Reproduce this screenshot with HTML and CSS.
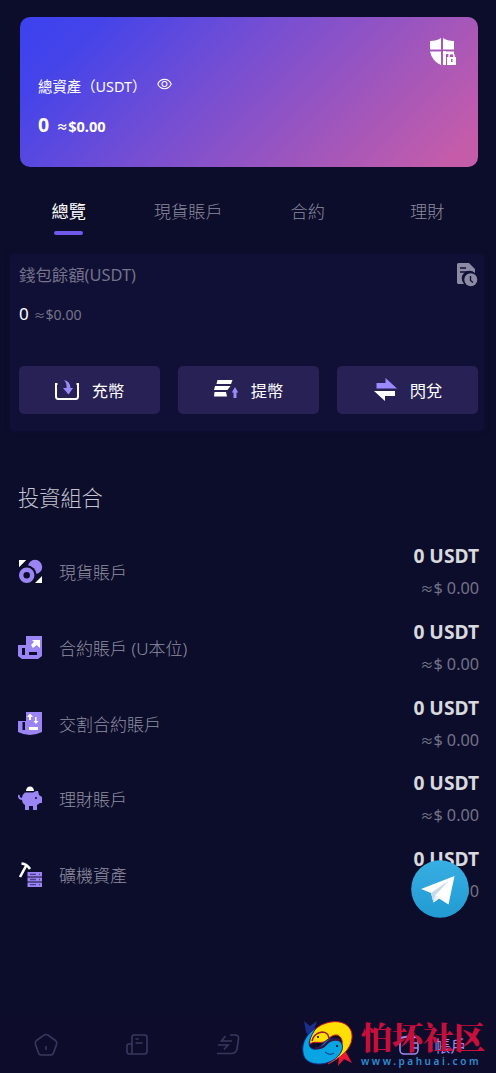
FILE: index.html
```html
<!DOCTYPE html>
<html lang="zh-Hant">
<head>
<meta charset="utf-8">
<title>帳戶</title>
<link rel="stylesheet" href="styles.css">
</head>
<body>
<main class="page">
  <section class="asset-card">
    <div class="asset-info">
      <div class="asset-title"><span>總資產（USDT）</span>
        <svg class="eye" viewBox="0 0 16 12" fill="none" stroke="#fff" stroke-width="1.1"><path d="M.8 6C3.8-.6 12.2-.6 15.2 6 12.2 12.6 3.8 12.6.8 6Z"/><circle cx="8" cy="6" r="2.7"/></svg>
      </div>
      <div class="asset-value"><b class="amount">0</b><b class="fiat"><i>≈</i>$0.00</b></div>
    </div>
    <svg class="shield" viewBox="0 0 28 30"><path fill="#fff" d="M1 4Q8 4 12 1V12.500H1ZM14 1Q18 4 25 4V12.500H14ZM1 14.500H12V28Q3 24 1 14.500ZM14 14.500H25V17H14Z"/><path fill="#fff" d="M14 14H17V28H14Z"/><path fill="#fff" d="M18 20H27V28H18Z"/><path d="M20 20V18.500Q20 16.500 22.500 16.500T25 18.500V20" fill="none" stroke="#fff" stroke-width="1.400"/><path d="M22 22h1.500v3H22Z" fill="#b05ab8"/></svg>
  </section>

  <nav class="tabs"><a class="tab active">總覽</a><a class="tab">現貨賬戶</a><a class="tab">合約</a><a class="tab">理財</a></nav>

  <section class="wallet">
    <div class="wallet-head"><span>錢包餘額(USDT)</span>
      <svg class="history" viewBox="0 0 21 24"><path fill="#8d8ba4" d="M1.500 0H12L18 6V10A7 7 0 0 0 7 21H1.500Q0 21 0 19.500V1.500Q0 0 1.500 0Z"/><path d="M3 5h6M3 9h9" stroke="#100f35" stroke-width="1.500"/><circle cx="13.800" cy="16.700" r="6.500" fill="#8d8ba4"/><path d="M13.500 13v4.500l2.500 2" fill="none" stroke="#100f35" stroke-width="1.400"/></svg>
    </div>
    <div class="wallet-value"><span class="wallet-amount">0</span><span><i>≈</i>$0.00</span></div>
    <div class="actions">
      <button class="action"><svg viewBox="0 0 24 24"><path d="M2.500 6H1V18.500Q1 21 3.500 21H20.500Q23 21 23 18.500V6H21.500" fill="none" stroke="#fff" stroke-width="2"/><path fill="#9b8afb" d="M9 2Q15 3 15.500 10H18L13.500 16.500 8 10H11.500Q12 5 9 2Z"/></svg><span>充幣</span></button>
      <button class="action"><svg viewBox="0 0 24 24"><path fill="#fff" d="M3.500 2H18.500L17 6H2.500ZM1 8H16.500L13.500 12H0ZM.5 14H12L13 18.500H0Z"/><path fill="#9b8afb" d="M21 9L24.200 14.500H22.500V20H19.500V14.500H17.800Z"/></svg><span>提幣</span></button>
      <button class="action"><svg viewBox="0 0 24 24"><path fill="#9b8afb" d="M3.500 5H12.500V0L24 10.500H3.500Z"/><path fill="#fff" d="M1 13H22V18H12V23Z"/></svg><span>閃兌</span></button>
    </div>
  </section>

  <section class="portfolio">
    <h2>投資組合</h2>
    <div class="row"><svg viewBox="0 0 25 25"><path fill="#fff" d="M1 1H8L1 8ZM24 24H17L24 17Z"/><circle cx="17" cy="8" r="7.200" fill="#9b85f5"/><circle cx="8.700" cy="16.300" r="10" fill="#0c0d2a"/><path fill="#fff" d="M1 1H8L1 8Z"/><circle cx="8.700" cy="16.300" r="5.500" fill="none" stroke="#9b85f5" stroke-width="4.500"/></svg><span class="name">現貨賬戶</span><div class="balance"><b>0 USDT</b><span><i>≈</i>$ 0.00</span></div></div>
    <div class="row"><svg viewBox="0 0 25 25"><path fill="#9b85f5" d="M8 1H24V21L20 24H4L0 21V10H8Z"/><path fill="#fff" d="M14 5H22V13L18.500 10 15 13 13 10 16 7Z"/><path fill="#0c0d2a" d="M4 13H7V20H4ZM11 17H19V20H11Z"/></svg><span class="name">合約賬戶 (U本位)</span><div class="balance"><b>0 USDT</b><span><i>≈</i>$ 0.00</span></div></div>
    <div class="row"><svg viewBox="0 0 25 25"><path fill="#9b85f5" d="M8 1H24V21Q12 27 0 21V10H8Z"/><path fill="#0c0d2a" d="M4.500 11H7V19H4.500Z"/><path fill="#fff" d="M12 2.500L15 6H13V9H11V6H9ZM17 6H18.500V10H20.500L18 13 15.500 10H17ZM11 16H20V19H11Z"/></svg><span class="name">交割合約賬戶</span><div class="balance"><b>0 USDT</b><span><i>≈</i>$ 0.00</span></div></div>
    <div class="row"><svg viewBox="0 0 25 25"><path fill="#fff" d="M8 5A4 4.500 0 0 1 16 5Z"/><path fill="#9b85f5" d="M7 6.500H15L18 5H20L21 9 24 11V17H22L19 19V24H15V20H11V24H7V19Q3.500 17 4 12 4.500 8 7 6.500Z"/><path d="M5 13Q0 13 1 9" fill="none" stroke="#9b85f5" stroke-width="1.800"/><circle cx="18" cy="12" r="1" fill="#0c0d2a"/></svg><span class="name">理財賬戶</span><div class="balance"><b>0 USDT</b><span><i>≈</i>$ 0.00</span></div></div>
    <div class="row"><svg viewBox="0 0 25 25"><path d="M2 15L8 4M3.500 1.500Q9 2 12 7" fill="none" stroke="#fff" stroke-width="2.600"/><path fill="#9b85f5" d="M9.500 10H24V14.500H9.500ZM9.500 15.500H24V19.500H9.500ZM9.500 20.500H24V25H9.500Z"/><path d="M12 12.300h6M12 17.500h6M12 22.700h6M21 12.300h1M21 17.500h1M21 22.700h1" stroke="#4b3d91" stroke-width="1.300"/></svg><span class="name">礦機資產</span><div class="balance"><b>0 USDT</b><span><i>≈</i>$ 0.00</span></div></div>
  </section>
</main>

<svg class="telegram" viewBox="0 0 58 58"><defs><linearGradient id="tg" x2="0" y2="1"><stop stop-color="#38aee2"/><stop offset="1" stop-color="#219bd3"/></linearGradient></defs><circle cx="29" cy="29" r="28.800" fill="url(#tg)"/><path fill="#fff" d="M10 29L43.500 16 37.500 44.500 28 38.500 22.500 42.500 20 33Z"/><path fill="#c8daea" d="M20 33L38 20.500 24.500 35 22.500 42.500Z"/><path fill="#e9f1f8" d="M24.500 35L28 38.500 22.500 42.500Z"/></svg>

<nav class="bottom-bar">
  <a class="nav-item"><svg viewBox="0 0 24 24"><path d="M10 2.200Q12 .8 14 2.200L21.500 7.500Q23.300 9 22.600 11.200L19.500 20Q18.900 22 16.600 22H7.400Q5.100 22 4.500 20L1.400 11.200Q.7 9 2.500 7.500Z"/><path d="M12 13v4"/></svg></a>
  <a class="nav-item"><svg viewBox="0 0 24 24"><path d="M7 21V4Q7 2 9 2H19.500Q22 2 22 4.500V18.500Q22 21 19.500 21H4.500Q2 21 2 18.500V13Q2 11 4 11H7M10.500 6h3M10.500 10h7"/></svg></a>
  <a class="nav-item"><svg viewBox="0 0 24 24"><path d="M14 2H19Q23 2 22.500 6L21 16Q20 20.500 15 20.500H1M9.500 3L5.500 8H16M2 12H12L8 16.500"/></svg></a>
  <a class="nav-item"></a>
  <a class="nav-item current"><svg viewBox="0 0 24 24"><rect x="3" y="4" width="18" height="17" rx="4"/><path d="M5 5L15 2 18 5M21 10H16Q13 12.500 16 15H21"/></svg><span>帳戶</span></a>
</nav>

<aside class="watermark">
  <svg viewBox="0 0 52 48">
    <path fill="#1b2f8c" d="M2 1L8 6 15 1 12 10 8 18 4 12Z"/>
    <path fill="#ee1535" d="M41 27L50 43 42 39 36 46 37 36Z"/>
    <path fill="#ffe000" stroke="#d01232" stroke-width="1" d="M8 24C6 12 17 4 29 2 42 0 51 7 50 18 49 30 38 38 26 44 37 34 43 25 39 18 35 12 29 16 25 20 20 25 13 20 8 24Z"/>
    <path fill="#08a4e3" stroke="#172c82" stroke-width="1" d="M1 33C-1 22 6 13 14 8 8 17 5 25 9 28 15 32 19 25 25 20 33 16 43 22 40 30 37 39 25 45 15 44 6 43 2 39 1 33Z"/>
    <path d="M10 21Q12 13 20 12 26 12 27 18" fill="none" stroke="#a01533" stroke-width="1.500"/>
    <path d="M13 28Q20 29 24 24 29 18 38 20" fill="none" stroke="#351540" stroke-width="2.500"/>
    <path d="M23 32q5 4 9 1" fill="none" stroke="#123071"/>
    <circle cx="16" cy="17" r="1"/><circle cx="35" cy="26" r="1"/>
  </svg>
  <div class="brand"><strong>怕坏社区</strong><span>www.pahuai.com</span></div>
</aside>
</body>
</html>
```

FILE: styles.css
```css
* { box-sizing: border-box; }
body {
  margin: 0;
  height: 1073px;
  overflow: hidden;
  background: #0c0d2a;
  color: #fff;
  font-family: "Noto Sans", "Noto Sans CJK TC", sans-serif;
}
i { font-style: normal; font-size: .82em; }
svg { display: block; overflow: visible; flex: none; }
.page { padding: 17px 9px 0; }
.asset-card {
  display: flex;
  justify-content: space-between;
  height: 150px;
  margin: 0 9px 0 11px;
  padding: 20px 21px 0 18px;
  border-radius: 10px;
  background: linear-gradient(135deg, #3b42f0 0%, #4544e9 14%, #754ed3 42%, #a056bc 70%, #c45caa 94%);
}
.asset-info { padding-top: 39px; }
.asset-title { display: flex; height: 22px; line-height: 22px; font-size: 14.4px; }
.asset-title span { width: 119px; white-space: nowrap; }
.eye { width: 15px; height: 12px; margin-top: 2px; }
.asset-value { display: flex; align-items: baseline; gap: 7px; margin-top: 12px; line-height: 30px; }
.amount { font-size: 19.5px; }
.fiat { font-size: 14.6px; }
.shield { width: 28px; height: 30px; }
.tabs { display: flex; height: 87px; padding-top: 31px; }
.tab { flex: 1; height: 36px; text-align: center; font-size: 17.2px; line-height: 28px; color: #8b8a9e; font-weight: 300; }
.tab.active { color: #fff; font-weight: 400; }
.tab.active::after { content: ""; display: block; width: 29px; height: 4px; margin: 5px auto 0; border-radius: 2px; background: #7159e9; }
.wallet { height: 177px; margin: 0 3px 0 1px; padding: 9px 6px 0 9px; border-radius: 4px; background: #100f35; box-shadow: 0 0 5px #100f35; }
.wallet-head { display: flex; justify-content: space-between; height: 38px; line-height: 24px; font-size: 16.4px; color: #747389; }
.history { width: 21px; height: 24px; }
.wallet-value { display: flex; align-items: baseline; gap: 5px; height: 65px; line-height: 25px; font-size: 14.2px; color: #747389; }
.wallet-amount { color: #fff; font-size: 17px; }
.actions { display: grid; grid-template-columns: repeat(3, 141px); gap: 18px; }
.action { display: flex; align-items: center; justify-content: center; gap: 13px; height: 48px; padding: 0; border: 0; border-radius: 5px; background: #282156; color: #fff; font: inherit; font-size: 16.3px; }
.action svg { width: 24px; height: 24px; }
.portfolio { padding: 50px 8px 0 9px; }
h2 { height: 54px; margin: 0; font-size: 21.2px; line-height: 33px; font-weight: 300; color: #c5c4d1; }
.row { display: flex; align-items: center; height: 75.7px; }
.row svg { width: 25px; height: 25px; margin-bottom: 2px; }
.name { margin: 0 0 2px 16px; font-size: 17px; font-weight: 300; color: #908fa2; }
.balance { display: flex; flex-direction: column; margin-left: auto; text-align: right; font-size: 16.2px; line-height: 33px; color: #747389; }
.balance b { font-size: 19.2px; color: #d8d8df; }
.telegram { position: absolute; left: 411px; top: 860px; width: 58px; height: 58px; }
.bottom-bar { position: absolute; left: 0; right: 0; bottom: 0; display: flex; height: 57px; background: #0d0d2b; }
.nav-item { display: flex; justify-content: center; align-items: center; flex: none; width: 91px; }
.nav-item svg { width: 24px; height: 24px; fill: none; stroke: #3a375f; stroke-width: 1.6; }
.nav-item.current { width: 136px; gap: 13px; color: #9c8aef; font-size: 16px; }
.nav-item.current svg { stroke: #9c8aef; }
.watermark { position: absolute; left: 302px; top: 1020px; display: flex; gap: 7px; }
.watermark svg { width: 52px; height: 48px; }
.brand { display: flex; flex-direction: column; white-space: nowrap; }
.brand strong { height: 33px; color: #c90e3c; font: 900 31px/32px "Noto Serif CJK SC", "Noto Sans CJK SC", serif; }
.brand span { color: #318bd0; font-size: 10px; font-weight: 600; line-height: 17px; letter-spacing: 2.55px; }
```
